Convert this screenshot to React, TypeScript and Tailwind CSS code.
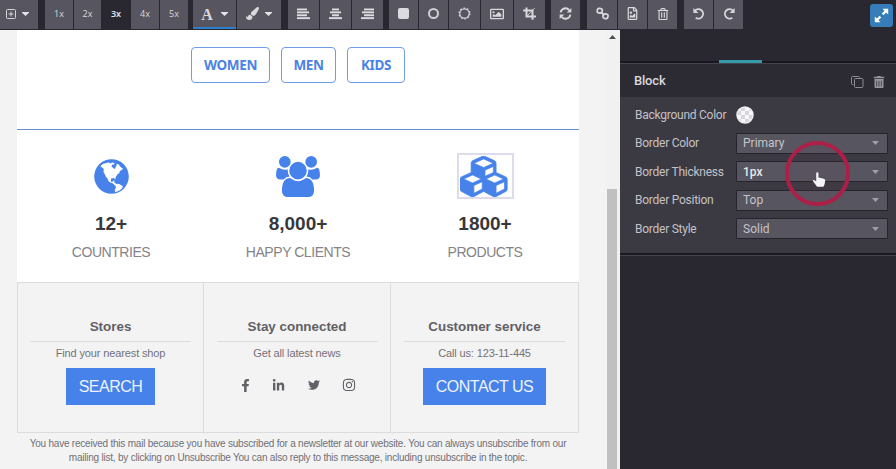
import type { ReactNode } from "react";
import {
  FaCrop,
  FaFacebookF,
  FaInstagram,
  FaLinkedinIn,
  FaPaintBrush,
  FaRegFileImage,
  FaRegImage,
  FaRegTrashAlt,
  FaTrashAlt,
  FaTwitter,
} from "react-icons/fa";

function Tool({ w, className = "", children }: { w: string; className?: string; children?: ReactNode }) {
  return (
    <div className={`flex h-[29px] shrink-0 items-center justify-center bg-[#57555f] pb-[2px] text-[#d9d8dc] ${w} ${className}`}>
      {children}
    </div>
  );
}

function Group({ className, children }: { className: string; children: ReactNode }) {
  return <div className={`flex shrink-0 gap-px ${className}`}>{children}</div>;
}

function Caret() {
  return (
    <svg width="7" height="4" viewBox="0 0 7 4" fill="#e4e3e6">
      <path d="M0 0h7v.8L3.5 4 0 .8z" />
    </svg>
  );
}

function AlignIcon({ widths, anchor }: { widths: number[]; anchor: "left" | "center" | "right" }) {
  return (
    <svg width="13" height="12" viewBox="0 0 13 12" fill="#dddce0">
      {widths.map((w, i) => (
        <rect key={i} x={anchor === "left" ? 0 : anchor === "right" ? 13 - w : (13 - w) / 2} y={0.5 + i * 2.9} width={w} height="1.9" />
      ))}
    </svg>
  );
}

function Turn({ flip = false }: { flip?: boolean }) {
  return (
    <svg width="14" height="14" viewBox="0 0 14 14" fill="none" stroke="#d6d5da" strokeWidth="1.9" className={flip ? "-scale-x-100" : ""}>
      <path d="M3 3.6a4.7 4.7 0 1 1 .7 7.1" />
      <path d="M1.4 1v5h5z" fill="#d6d5da" stroke="none" />
    </svg>
  );
}

function Refresh() {
  return (
    <svg width="13" height="13" viewBox="0 0 14 14" fill="none" stroke="#d9d8dc" strokeWidth="2">
      <path d="M1.8 5.8A5.2 5.2 0 0 1 11 3.4M12.2 8.2A5.2 5.2 0 0 1 3 10.6" />
      <path d="M13.3 1v5h-5zM.7 13V8h5z" fill="#d9d8dc" stroke="none" />
    </svg>
  );
}

function Toolbar() {
  return (
    <header className="flex h-[30px] shrink-0 items-start bg-[#292730] font-['Open_Sans',sans-serif]">
      <Group className="w-[38px]">
        <Tool w="w-[38px]" className="gap-[6px] pr-[3px]">
          <svg width="10" height="10" viewBox="0 0 10 10" fill="none" stroke="#d4d3d8">
            <rect x=".5" y=".5" width="9" height="9" rx="1" />
            <path d="M5 2.5v5M2.5 5h5" />
          </svg>
          <Caret />
        </Tool>
      </Group>
      <Group className="ml-[7px] text-[9px]">
        <Tool w="w-[28px]" className="text-[#c4c3c8]">1x</Tool>
        <Tool w="w-[27px]" className="text-[#c4c3c8]">2x</Tool>
        <Tool w="w-[28px]" className="bg-[#292730]! font-semibold text-[#e9e9eb]">3x</Tool>
        <Tool w="w-[28px]" className="text-[#c4c3c8]">4x</Tool>
        <Tool w="w-[28px]" className="text-[#c4c3c8]">5x</Tool>
      </Group>
      <Group className="ml-[5px]">
        <Tool w="w-[43px]" className="gap-2 border-b-2 border-[#2d7fca] pb-0!">
          <span className="pt-[3px] font-['Liberation_Serif',serif] text-[16px] leading-none font-bold">A</span>
          <Caret />
        </Tool>
        <Tool w="w-[44px]" className="gap-[6px]">
          <FaPaintBrush size={13} />
          <Caret />
        </Tool>
      </Group>
      <Group className="ml-[7px]">
        <Tool w="w-[31px]"><AlignIcon anchor="left" widths={[10, 12, 10, 13]} /></Tool>
        <Tool w="w-[31px]"><AlignIcon anchor="center" widths={[7, 11, 7, 13]} /></Tool>
        <Tool w="w-[31px]"><AlignIcon anchor="right" widths={[10, 12, 10, 13]} /></Tool>
      </Group>
      <Group className="ml-[6px]">
        <Tool w="w-[29px]"><span className="h-[11px] w-[11px] rounded-[2px] bg-[#dbdade]" /></Tool>
        <Tool w="w-[29px]"><span className="h-[11px] w-[11px] rounded-full border-2 border-[#d0cfd4]" /></Tool>
        <Tool w="w-[31px]">
          <svg width="13" height="13" viewBox="0 0 13 13" fill="none" stroke="#d0cfd4">
            <circle cx="6.5" cy="6.5" r="4.7" strokeWidth="1.2" />
            <circle cx="6.5" cy="6.5" r="5.3" strokeWidth="1.5" strokeDasharray="1.6 1.73" />
          </svg>
        </Tool>
        <Tool w="w-[32px]"><FaRegImage size={14} /></Tool>
        <Tool w="w-[31px]">
          <svg width="13" height="13" viewBox="0 0 13 13" fill="none" stroke="#d9d8dc" strokeWidth="2">
            <path d="M3.5.5v9H13M.2 3.5h9.3v9.3" />
            <path d="m4 9 7.5-7.8" strokeWidth=".9" />
          </svg>
        </Tool>
      </Group>
      <Group className="ml-[6px]">
        <Tool w="w-[29px]"><Refresh /></Tool>
      </Group>
      <Group className="ml-[7px]">
        <Tool w="w-[30px]">
          <svg width="13" height="13" viewBox="0 0 13 13" fill="none" stroke="#d9d8dc" strokeWidth="1.7">
            <rect x="1.2" y="1.5" width="5" height="4.6" rx="1.8" transform="rotate(10 4 4)" />
            <rect x="7" y="6.8" width="5" height="4.6" rx="1.8" transform="rotate(10 9 9)" />
            <path d="m4.8 4.8 3.6 3.5" />
          </svg>
        </Tool>
        <Tool w="w-[29px]"><FaRegFileImage size={13} /></Tool>
        <Tool w="w-[29px]" className="text-[#b5b4ba]"><FaRegTrashAlt size={12} /></Tool>
      </Group>
      <Group className="ml-[7px]">
        <Tool w="w-[29px]"><Turn /></Tool>
        <Tool w="w-[29px]"><Turn flip /></Tool>
      </Group>
      <button className="mt-[4px] mr-[3px] ml-auto flex h-[23px] w-[23px] items-center justify-center rounded-[3px] bg-[#367cb8]">
        <svg width="15" height="15" viewBox="0 0 15 15" fill="#fff">
          <path d="M8.5.8h5.7v5.7zM.8 8.5v5.7h5.7z" />
          <path d="m12 3-3.4 3.4M6.4 8.6 3 12" stroke="#fff" strokeWidth="2.4" />
        </svg>
      </button>
    </header>
  );
}

function Globe() {
  return (
    <svg width="35" height="35" viewBox="0 0 35 35">
      <circle cx="17.5" cy="17.5" r="17.3" fill="#4682ea" />
      <path
        fill="#fff"
        d="M6.4 7.2 8.8 5l4.3-1.3 2-.2 1.1 1 2.3-.9 2 .4-.5 1.5-2.1.3-.3 1.8 1.8 1.7 1.7.6.6-2.4 1-.7-.3-1.7 2.1.2 1.7 2.2 1.7 1.5 1.3 1-2.2 1.2-1.6 1.5.1 1.2-2 1.3-1.4 2.3-.7 1.1.2 1.8-.8-.7-1.2-.7-2.3.6-.6 1.9.7 1.5 1.7-.4.5-1 1.1.1-.6 1.9 1.6.5.2 1.6 1.2.9-.6.4-2.2-.9-1.2-1.6-2.7-1-1.9-1.3-1-2.6-1.5-1.7-1.4-3.1-1.1-1.8.3-3.1z"
      />
      <path fill="#fff" d="m21.3 25.7 1.7-1 2.3.4 2.2 1.5 1.5.6-1.3 2.6-2.7 2-3.7 1.4-.6-2.3 1.2-2.4z" />
    </svg>
  );
}

function Users() {
  return (
    <svg width="44" height="41" viewBox="0 0 1920 1792" fill="#4682ea">
      <path d="M593 896q-162 5-265 128h-134q-82 0-138-40.5t-56-118.5q0-353 124-353 6 0 43.5 21t97.5 42.5 119 21.5q67 0 133-23-5 37-5 66 0 139 81 256zm1071 637q0 120-73 189.5t-194 69.5h-874q-121 0-194-69.5t-73-189.5q0-53 3.5-103.5t14-109 26.5-108.5 43-97.5 62-81 85.5-53.5 111.5-20q10 0 43 21.5t73 48 107 48 135 21.5 135-21.5 107-48 73-48 43-21.5q61 0 111.5 20t85.5 53.5 62 81 43 97.5 26.5 108.5 14 109 3.5 103.5zm-1024-1277q0 106-75 181t-181 75-181-75-75-181 75-181 181-75 181 75 75 181zm704 384q0 159-112.5 271.5t-271.5 112.5-271.5-112.5-112.5-271.5 112.5-271.5 271.5-112.5 271.5 112.5 112.5 271.5zm576 225q0 78-56 118.5t-138 40.5h-134q-103-123-265-128 81-117 81-256 0-29-5-66 66 23 133 23 59 0 119-21.5t97.5-42.5 43.5-21q124 0 124 353zm-128-609q0 106-75 181t-181 75-181-75-75-181 75-181 181-75 181 75 75 181z" />
    </svg>
  );
}

function Cubes() {
  return (
    <svg width="50" height="41" viewBox="0 0 2304 1792" preserveAspectRatio="none" fill="#4682ea" stroke="#4682ea" strokeWidth="30">
      <path d="M640 1632l384-192v-314l-384 164v342zm-64-454l404-173-404-173-404 173zm1088 454l384-192v-314l-384 164v342zm-64-454l404-173-404-173-404 173zm-448-293l384-165v-266l-384 164v267zm-64-379l441-189-441-189-441 189zm1088 518v416q0 36-19 67t-52 47l-448 224q-25 14-57 14t-57-14l-448-224q-5-2-7-4-2 2-7 4l-448 224q-25 14-57 14t-57-14l-448-224q-33-16-52-47t-19-67v-416q0-38 21.5-70t56.5-48l434-186v-400q0-38 21.5-70t56.5-48l448-192q23-10 50-10t50 10l448 192q35 16 56.5 48t21.5 70v400l434 186q36 16 57 48t21 70z" />
    </svg>
  );
}

function Stat({ icon, value, label }: { icon: ReactNode; value: string; label: string }) {
  return (
    <div className="flex w-[187px] flex-col items-center pt-[23px] pl-px">
      <div className="flex h-[46px] items-center justify-center">{icon}</div>
      <div className="mt-[11px] text-[19px] leading-[28px] font-bold text-[#38373c]">{value}</div>
      <div className="mt-[4px] text-[14px] leading-[20px] tracking-[-0.45px] whitespace-nowrap text-[#858387]">{label}</div>
    </div>
  );
}

function FooterColumn({ w, title, text, children }: { w: string; title: string; text: string; children: ReactNode }) {
  return (
    <div className={`flex flex-col items-center border-r border-[#dcdcde] pt-[35px] ${w}`}>
      <h3 className="text-[13.4px] leading-[18px] font-bold text-[#626065]">{title}</h3>
      <div className="mt-[5px] h-px w-[161px] bg-[#dedbdc]" />
      <p className="mt-[3px] text-[11px] leading-[16px] tracking-[-0.13px] text-[#747277]">{text}</p>
      {children}
    </div>
  );
}

function NavButton({ w, children }: { w: string; children: ReactNode }) {
  return (
    <div className={`flex h-[36px] items-center justify-center rounded-[4px] border border-[#709be8] pt-px font-['Noto_Sans',sans-serif] text-[13.5px] font-bold tracking-[-0.35px] text-[#4b82e5] ${w}`}>
      {children}
    </div>
  );
}

function Email() {
  return (
    <main className="flex w-[620px] shrink-0 bg-[#f3f3f4] font-['Liberation_Sans',sans-serif]">
      <article className="ml-[17px] flex w-[562px] flex-col">
        <section className="flex h-[100px] shrink-0 items-start justify-center gap-[11px] border-b border-[#6990cc] bg-white pt-[17px]">
          <NavButton w="w-[79px]">WOMEN</NavButton>
          <NavButton w="w-[55px]">MEN</NavButton>
          <NavButton w="w-[58px]">KIDS</NavButton>
        </section>
        <section className="flex h-[152px] shrink-0 bg-white">
          <Stat icon={<Globe />} value="12+" label="COUNTRIES" />
          <Stat icon={<Users />} value="8,000+" label="HAPPY CLIENTS" />
          <Stat
            icon={<div className="flex h-[46px] w-[57px] items-center justify-center border-2 border-[#dedcec]"><Cubes /></div>}
            value="1800+"
            label="PRODUCTS"
          />
        </section>
        <section className="flex h-[151px] shrink-0 border-y border-l border-[#dcdcde]">
          <FooterColumn w="w-[186px]" title="Stores" text="Find your nearest shop">
            <div className="mt-[7px] flex h-[37px] w-[89px] items-center justify-center bg-[#4682ea] text-[16px] tracking-[-0.5px] text-[#eef3fb]">SEARCH</div>
          </FooterColumn>
          <FooterColumn w="w-[187px]" title="Stay connected" text="Get all latest news">
            <div className="mt-[17px] flex items-center text-[#636167]">
              <FaFacebookF size={13} />
              <FaLinkedinIn size={13} className="ml-[20px]" />
              <FaTwitter size={12} className="ml-[23px]" />
              <FaInstagram size={14} className="ml-[22px]" />
            </div>
          </FooterColumn>
          <FooterColumn w="w-[188px]" title="Customer service" text="Call us: 123-11-445">
            <div className="mt-[7px] flex h-[37px] w-[123px] items-center justify-center bg-[#4682ea] text-[16px] tracking-[-0.5px] text-[#eef3fb]">CONTACT US</div>
          </FooterColumn>
        </section>
        <footer className="pt-[4px] text-center text-[10px] leading-[14px] tracking-[-0.22px] whitespace-nowrap text-[#717074]">
          <p>You have received this mail because you have subscribed for a newsletter at our website. You can always unsubscribe from our</p>
          <p>mailing list, by clicking on Unsubscribe You can also reply to this message, including unsubscribe in the topic.</p>
        </footer>
      </article>
      <div className="ml-auto flex w-[13px] flex-col items-start bg-[#f1f1f2]">
        <svg width="7" height="4" viewBox="0 0 7 4" className="mt-[5px] ml-[2px]"><path d="M3.5 0 7 4H0z" fill="#504f54" /></svg>
        <div className="mt-[150px] w-[10px] flex-1 bg-[#c0c0c1]" />
      </div>
    </main>
  );
}

function Field({ label, value, strong = false }: { label: string; value: string; strong?: boolean }) {
  return (
    <div className="mb-[7.6px] flex h-[21px] items-center">
      <span className="w-[101px] text-[12px] tracking-[-0.25px] whitespace-nowrap text-[#c3c2c7]">{label}</span>
      <div className="flex h-[21px] w-[152px] items-center justify-between rounded-[1px] border border-[#25232b] bg-[#57555f] pr-[8px] pl-[6px] text-[12px]">
        <span className={strong ? "font-medium text-[#e9e8eb]" : "text-[#c5c4c9]"}>{value}</span>
        <svg width="7" height="4" viewBox="0 0 7 4"><path d="M0 0h7L3.5 4z" fill="#a09fa6" /></svg>
      </div>
    </div>
  );
}

function Inspector() {
  return (
    <aside className="relative flex flex-1 flex-col bg-[#292730] font-['Roboto',sans-serif]">
      <div className="flex h-[33px] items-end border-b-2 border-[#19181f]">
        <div className="-mb-[2px] ml-[99px] h-[3px] w-[43px] bg-[#329aa8]" />
      </div>
      <div className="flex h-[34px] shrink-0 items-center border-t border-[#45434c] bg-[#2c2a33] pt-px pr-[11px] pl-[14px]">
        <h2 className="text-[13px] font-medium tracking-[-0.2px] text-[#d9d8dc]">Block</h2>
        <svg width="13" height="12" viewBox="0 0 13 12" fill="none" stroke="#8b8991" className="mt-[2px] ml-auto">
          <path d="M2.5 8.5h-1a1 1 0 0 1-1-1v-6a1 1 0 0 1 1-1h6a1 1 0 0 1 1 1v1" />
          <rect x="3.5" y="2.5" width="8.5" height="9" rx="1" />
        </svg>
        <FaTrashAlt size={12} className="mt-[2px] ml-[9px] text-[#97959d]" />
      </div>
      <div className="h-[158px] shrink-0 border-b-2 border-[#1b1a20] bg-[#3b3942] pt-[7px] pl-[15px]">
        <div className="mb-[7.6px] flex h-[21px] items-center">
          <span className="w-[101px] text-[12px] tracking-[-0.25px] whitespace-nowrap text-[#c3c2c7]">Background Color</span>
          <svg width="18" height="18" viewBox="0 0 18 18">
            <defs>
              <pattern id="checks" width="8" height="8" patternUnits="userSpaceOnUse" x="1" y="1">
                <rect width="8" height="8" fill="#f8f8f8" />
                <path d="M4 0h4v4H4zM0 4h4v4H0z" fill="#d6d5d9" />
              </pattern>
            </defs>
            <circle cx="9" cy="9" r="8" fill="url(#checks)" stroke="#eeedf0" strokeWidth="1.5" />
          </svg>
        </div>
        <Field label="Border Color" value="Primary" />
        <Field label="Border Thickness" value="1px" strong />
        <Field label="Border Position" value="Top" />
        <Field label="Border Style" value="Solid" />
      </div>
      <div className="h-px bg-[#45434c]" />
      <div className="absolute top-[111px] left-[165px] h-[65px] w-[65px] rounded-full border-[4px] border-[#ac2048] bg-[#66455d]/10">
        <svg width="15" height="16" viewBox="0 0 15 16" className="absolute top-[27px] left-[23px]">
          <path d="M4.2 1.4Q4.2.3 5.3.3t1.1 1.1v4.2l5.5 1.1q1.6.4 1.3 2l-.7 3.8-1.1 2.2H5.1L1.2 9.6Q.2 8.2 1.5 7.9q1-.2 2.7 1.6z" fill="#f5f4f6" />
        </svg>
      </div>
    </aside>
  );
}

export default function App() {
  return (
    <div className="flex h-[469px] w-[896px] flex-col overflow-hidden bg-[#292730]">
      <Toolbar />
      <div className="flex min-h-0 flex-1">
        <Email />
        <Inspector />
      </div>
    </div>
  );
}
